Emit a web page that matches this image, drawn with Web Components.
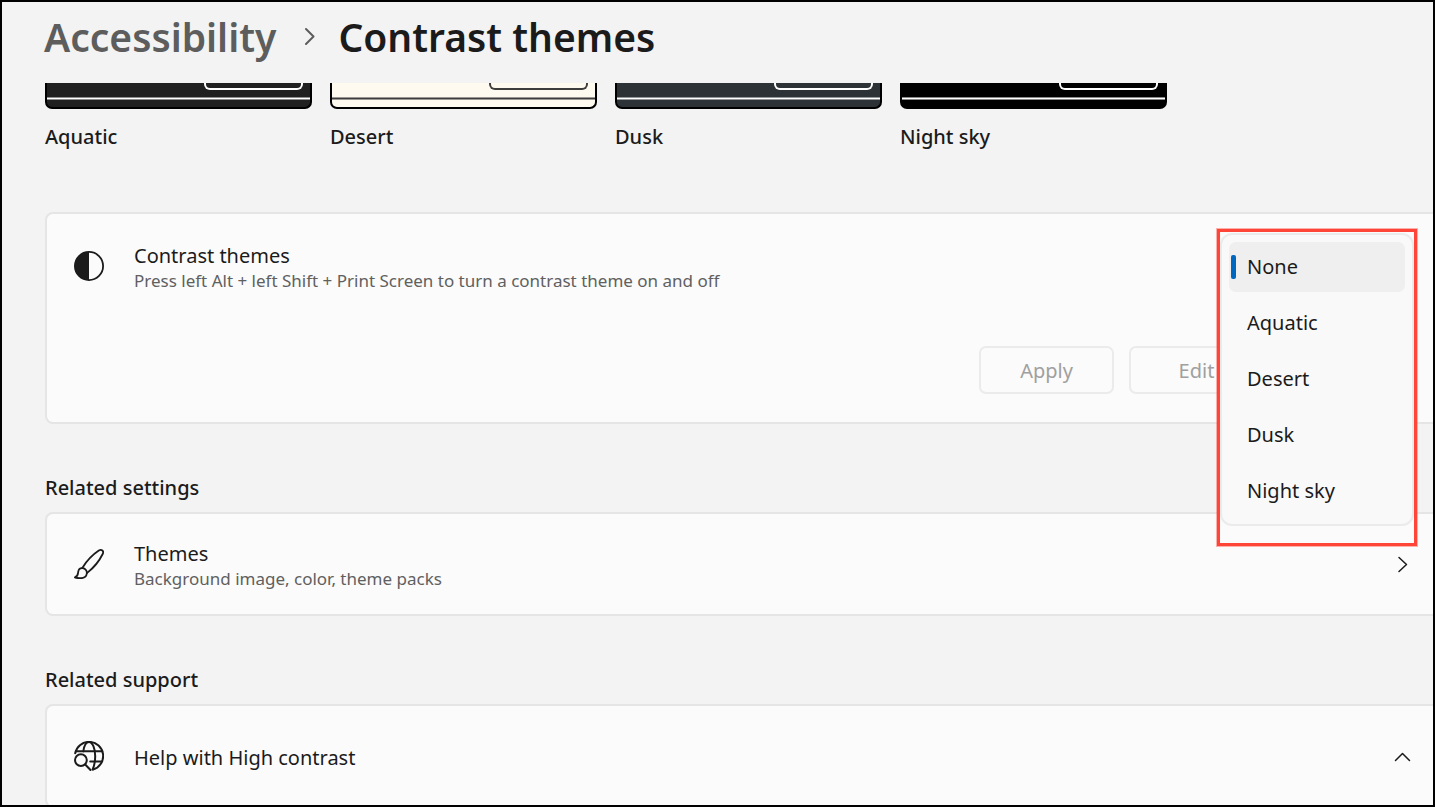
<!DOCTYPE html>
<html lang="en">
<head>
<meta charset="utf-8">
<meta name="viewport" content="width=device-width, initial-scale=1">
<title>Contrast themes</title>
<style>
  html, body { margin: 0; background: #f3f3f3; }
  body {
    font: 400 20px/28px "Noto Sans", "Open Sans", sans-serif;
    color: #1b1b1b;
    --muted: #606060;
    --card: #fbfbfb;
    --line: #e5e5e5;
  }
</style>
</head>
<body>
<settings-window>
  <bread-crumb slot="header" parent="Accessibility" current="Contrast themes"></bread-crumb>

  <theme-gallery>
    <theme-preview name="Aquatic" style="--surface:#202020;--stroke:#ffffff;--soft:#8e8e8e"></theme-preview>
    <theme-preview name="Desert" style="--surface:#fffaef;--stroke:#3d3d3d;--soft:#9b9893"></theme-preview>
    <theme-preview name="Dusk" style="--surface:#2d3236;--stroke:#ffffff;--soft:#94979a"></theme-preview>
    <theme-preview name="Night sky" style="--surface:#000000;--stroke:#ffffff;--soft:#8a8a8a"></theme-preview>
  </theme-gallery>

  <settings-card>
    <settings-row heading="Contrast themes" detail="Press left Alt + left Shift + Print Screen to turn a contrast theme on and off">
      <line-icon slot="icon" name="contrast"></line-icon>
    </settings-row>
    <button-bar slot="actions"></button-bar>
    <theme-picker slot="popup"></theme-picker>
  </settings-card>

  <settings-section heading="Related settings">
    <settings-card>
      <settings-row action heading="Themes" detail="Background image, color, theme packs">
        <line-icon slot="icon" name="brush"></line-icon>
        <line-icon slot="end" name="right"></line-icon>
      </settings-row>
    </settings-card>
  </settings-section>

  <settings-section heading="Related support">
    <settings-card>
      <settings-row action heading="Help with High contrast">
        <line-icon slot="icon" name="globe"></line-icon>
        <line-icon slot="end" name="up"></line-icon>
      </settings-row>
    </settings-card>
  </settings-section>
</settings-window>

<script>
  const define = (name, render) => customElements.define(name, class extends HTMLElement {
    constructor() {
      super();
      this.attachShadow({ mode: 'open' });
    }
    connectedCallback() {
      const template = document.createElement('template');
      template.innerHTML = render(this);
      this.shadowRoot.replaceChildren(template.content.cloneNode(true));
    }
  });

  define('settings-window', () => `
    <style>
      :host { display: flex; flex-direction: column; box-sizing: border-box; height: 100vh; overflow: hidden; border: 2px solid #000; }
      header { flex: none; padding: 9px 42px 20px; }
      main { flex: 1; min-height: 0; overflow: hidden; padding-left: 43px; }
    </style>
    <header><slot name="header"></slot></header>
    <main><slot></slot></main>`);

  define('bread-crumb', el => `
    <style>
      :host { display: block; }
      nav { display: flex; align-items: center; font-size: 39px; line-height: 52px; font-weight: 600; }
      a { color: #5d5d5d; text-decoration: none; }
      h1 { margin: 0; font: inherit; }
      svg { margin: 0 22px 2px 28px; }
    </style>
    <nav aria-label="Breadcrumb">
      <a href="#accessibility">${el.getAttribute('parent')}</a>
      <svg width="12" height="18" viewBox="0 0 12 18" fill="none" stroke="#5d5d5d" stroke-width="2" stroke-linecap="round" stroke-linejoin="round" aria-hidden="true"><path d="M2 2l7.5 7.5L2 17"/></svg>
      <h1>${el.getAttribute('current')}</h1>
    </nav>`);

  define('theme-gallery', () => `
    <style>
      :host { display: flex; gap: 18px; margin-bottom: 61px; }
    </style>
    <slot></slot>`);

  define('theme-preview', el => `
    <style>
      :host { display: block; width: 267px; font-weight: 500; }
      .art { display: flex; flex-direction: column; box-sizing: border-box; height: 26px; border: 2px solid #000; border-top: 0; border-radius: 0 0 7px 7px; background: var(--surface); }
      .box { align-self: flex-end; box-sizing: border-box; width: 99px; height: 7px; margin: 0 7px 7px 0; border: 2px solid var(--stroke); border-top: 0; border-radius: 0 0 6px 6px; }
      .bar { height: 1px; background: var(--stroke); border: 1px solid var(--soft); border-width: 1px 0; }
      p { margin: 14px 0 0; }
    </style>
    <div class="art"><div class="box"></div><div class="bar"></div></div>
    <p>${el.getAttribute('name')}</p>`);

  define('settings-section', el => `
    <style>
      :host { display: block; margin-top: 50px; }
      h2 { margin: 0 0 10px; font: inherit; font-weight: 500; }
    </style>
    <h2>${el.getAttribute('heading')}</h2>
    <slot></slot>`);

  define('settings-card', () => `
    <style>
      :host { display: block; position: relative; border: 2px solid var(--line); border-right: 0; border-radius: 8px 0 0 8px; background: var(--card); }
    </style>
    <slot></slot>
    <slot name="actions"></slot>
    <slot name="popup"></slot>`);

  define('settings-row', el => {
    const tag = el.hasAttribute('action') ? 'button' : 'div';
    const detail = el.getAttribute('detail');
    return `
    <style>
      :host { display: block; }
      .row { display: flex; align-items: center; gap: 30px; box-sizing: border-box; width: 100%; min-height: 100px; margin: 0; padding: 26px 22px 23px 27px; border: 0; background: none; font: inherit; color: inherit; text-align: left; }
      :host(:not([action])) .row { padding-top: 28px; }
      ::slotted(*) { margin-bottom: 3px; }
      .text { flex: 1; }
      .text span { display: block; line-height: 27px; }
      .text .detail { font-size: 17px; line-height: 24px; color: var(--muted); }
    </style>
    <${tag} class="row">
      <slot name="icon"></slot>
      <span class="text"><span>${el.getAttribute('heading')}</span>${detail ? `<span class="detail">${detail}</span>` : ''}</span>
      <slot name="end"></slot>
    </${tag}>`;
  });

  define('button-bar', () => `
    <style>
      :host { display: flex; justify-content: flex-end; gap: 15px; padding: 30px 169px 28px 27px; }
      button { box-sizing: border-box; width: 135px; height: 48px; padding: 2px 0 0; border: 2px solid #ebebeb; border-radius: 7px; background: #fbfbfb; font: inherit; color: #a0a0a0; }
    </style>
    <button type="button" disabled>Apply</button>
    <button type="button" disabled>Edit</button>`);

  define('theme-picker', () => `
    <style>
      :host { display: block; position: absolute; z-index: 1; top: 15px; right: 16px; width: 200px; box-sizing: border-box; padding: 1px 0 17px; border: 3px solid #ff4438; box-shadow: 0 0 0 1px #ff443866; }
      select { display: block; box-sizing: border-box; width: 100%; height: 293px; margin: 0; padding: 7px; border: 2px solid #ebebeb; border-radius: 12px; background: #f9f9f9; font: inherit; color: #1b1b1b; overflow: hidden; outline: 0; appearance: none; scrollbar-width: none; }
      option { position: relative; box-sizing: border-box; height: 50px; min-height: 50px; margin: 0 0 6px; padding: 11px 18px; border-radius: 7px; line-height: 28px; }
      option:checked { background: #efefef linear-gradient(#efefef, #efefef); color: #1b1b1b; }
      option:checked::before { content: ""; position: absolute; left: 2px; top: 13px; width: 5px; height: 24px; border-radius: 2px; background: #0067c0; }
    </style>
    <select size="5" aria-label="Contrast themes">
      <option selected>None</option>
      <option>Aquatic</option>
      <option>Desert</option>
      <option>Dusk</option>
      <option>Night sky</option>
    </select>`);

  const ICONS = {
    contrast: [30, '<circle cx="15" cy="15" r="14.1"/><path d="M15 1a14 14 0 0 0 0 28z" fill="currentColor" stroke="none"/>'],
    brush: [30, '<path d="M8.300 18.900C12 13 19 5.500 24.800 1.600C27.600 -.1 30.200 1.800 28.700 5C26 10.500 20 18.500 13.200 23.900"/><path d="M8.500 19.200C11.500 19.400 13.200 22 12.800 24.500C12.400 27.500 10 29.100 7 29.200C4.500 29.300 2.500 29.100 .9 28.400C4 27.300 3.800 25.500 4.200 22.800C4.600 20.500 6.200 19 8.500 19.200Z"/>'],
    globe: [30, '<g stroke-width="2"><path d="M1.200 12.300A14.100 14.100 0 1 1 19 28.500"/><path d="M2 10.300H28.300M16.200 20.400H28.200"/><path d="M9.300 10.300C10.100 5 12.300 1 15 1C18.500 1 21.200 7.500 21.200 15C21.200 20.500 20 25.500 18.600 28.500"/><circle cx="6.900" cy="19.100" r="5.900"/><path d="M11.200 23.500L16.500 29"/></g>'],
    right: [18, '<path d="M6 2.500l7.500 7l-7.500 7" stroke-width="1.500"/>'],
    up: [18, '<path d="M2.500 13.500L9.500 6.500L16.500 13.500" stroke-width="1.500"/>']
  };

  define('line-icon', el => {
    const [size, body] = ICONS[el.getAttribute('name')];
    return `
    <style>
      :host { display: block; flex: none; }
      svg { display: block; }
    </style>
    <svg width="${size}" height="${size}" viewBox="0 0 ${size} ${size}" fill="none" stroke="currentColor" stroke-width="1.8" stroke-linecap="round" stroke-linejoin="round" aria-hidden="true">${body}</svg>`;
  });
</script>
</body>
</html>
